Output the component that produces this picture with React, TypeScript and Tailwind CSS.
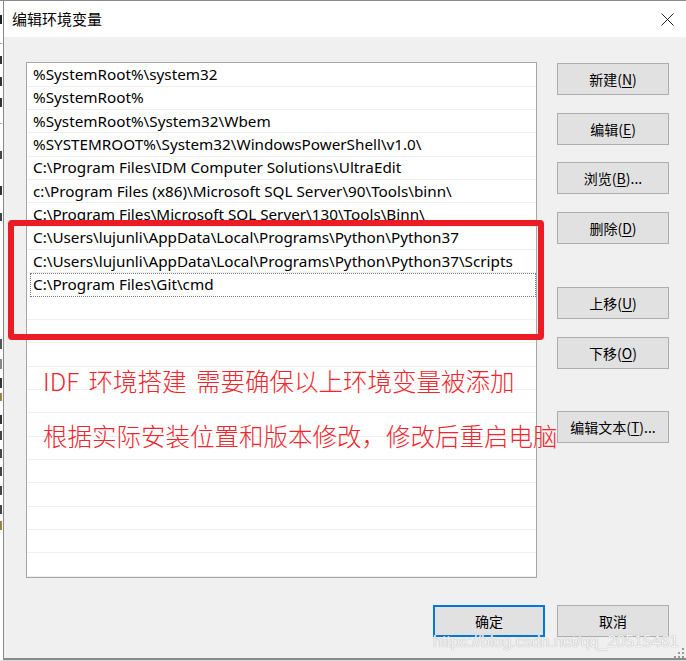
import React from "react";

const items = [
  "%SystemRoot%\\system32",
  "%SystemRoot%",
  "%SystemRoot%\\System32\\Wbem",
  "%SYSTEMROOT%\\System32\\WindowsPowerShell\\v1.0\\",
  "C:\\Program Files\\IDM Computer Solutions\\UltraEdit",
  "c:\\Program Files (x86)\\Microsoft SQL Server\\90\\Tools\\binn\\",
  "C:\\Program Files\\Microsoft SQL Server\\130\\Tools\\Binn\\",
  "C:\\Users\\lujunli\\AppData\\Local\\Programs\\Python\\Python37",
  "C:\\Users\\lujunli\\AppData\\Local\\Programs\\Python\\Python37\\Scripts",
  "C:\\Program Files\\Git\\cmd",
];

const cjk = "font-['Microsoft_YaHei','Noto_Sans_CJK_SC',sans-serif]";

function Btn({ label, mn, suffix = "", className = "" }: { label: string; mn?: string; suffix?: string; className?: string }) {
  return (
    <div
      className={`h-[32px] w-[112px] flex items-center justify-center bg-[#e1e1e1] border border-[#adadad] text-[14px] text-black ${cjk} ${className}`}
    >
      <span>
        {label}
        {mn ? (
          <>
            (<span className="underline underline-offset-2">{mn}</span>)
          </>
        ) : null}
        {suffix}
      </span>
    </div>
  );
}

function LeftStrip() {
  const marks = [
    { t: 14, h: 9, c: "bg-[#222]" },
    { t: 42, h: 1, c: "bg-[#999]" },
    { t: 55, h: 8, c: "bg-[#333]" },
    { t: 76, h: 9, c: "bg-[#333]" },
    { t: 97, h: 9, c: "bg-[#333]" },
    { t: 122, h: 1, c: "bg-[#aaa]" },
    { t: 150, h: 8, c: "bg-[#444]" },
    { t: 185, h: 9, c: "bg-[#333]" },
    { t: 212, h: 8, c: "bg-[#444]" },
    { t: 338, h: 10, c: "bg-[#555]" },
    { t: 358, h: 10, c: "bg-[#888]" },
    { t: 377, h: 10, c: "bg-[#333]" },
    { t: 392, h: 8, c: "bg-[#a08040]" },
    { t: 414, h: 9, c: "bg-[#333]" },
    { t: 430, h: 9, c: "bg-[#444]" },
    { t: 448, h: 9, c: "bg-[#444]" },
    { t: 466, h: 9, c: "bg-[#444]" },
    { t: 485, h: 9, c: "bg-[#444]" },
    { t: 504, h: 9, c: "bg-[#444]" },
    { t: 520, h: 9, c: "bg-[#a08040]" },
  ];
  let prev = 0;
  return (
    <div className="w-[3px] h-full bg-white flex flex-col">
      {marks.map((m, i) => {
        const mt = m.t - prev;
        prev = m.t + m.h;
        return <div key={i} className={`w-[2px] shrink-0 ${m.c}`} style={{ marginTop: mt, height: m.h }} />;
      })}
    </div>
  );
}

export default function App() {
  const rows = Array.from({ length: 22 }, (_, i) => items[i] ?? "");
  return (
    <div className="relative w-[686px] h-[661px] overflow-hidden bg-[#dcdcdc]">
      <div className="flex h-[660px] border-t border-[#8a8a8a]">
        <LeftStrip />
        <div className="flex-1 flex flex-col border-l border-b-2 border-[#8a8a8a]">
          {/* title bar */}
          <div className="h-[36px] bg-white flex items-center justify-between pl-[8px] pr-[12px]">
            <span className={`text-[15px] text-black ${cjk}`}>编辑环境变量</span>
            <svg width="13" height="13" viewBox="0 0 13 13" className="mt-[1px]">
              <path d="M0.5 0.5 L12.5 12.5 M12.5 0.5 L0.5 12.5" stroke="#222" strokeWidth="1" fill="none" />
            </svg>
          </div>
          {/* body */}
          <div className="flex-1 bg-[#f0f0f0] flex flex-col pl-[22px] pt-[25px]">
            <div className="flex gap-[20px]">
              <div className="w-[511px] h-[516px] bg-white border border-[#a6a6a6] overflow-hidden pt-[0.3px]">
                {rows.map((r, i) =>
                  i === 9 ? (
                    <div
                      key={i}
                      className="h-[23.33px] ml-[3px] border border-dotted border-[#7a7a7a] flex items-center pl-[2px] text-[15.25px] text-black font-['Segoe_UI','Noto_Sans',sans-serif] whitespace-nowrap"
                    >
                      {r}
                    </div>
                  ) : (
                    <div
                      key={i}
                      className="h-[23.33px] border-b border-[#f0f0f0] flex items-center pl-[6px] text-[15.25px] text-black font-['Segoe_UI','Noto_Sans',sans-serif] whitespace-nowrap"
                    >
                      {r}
                    </div>
                  )
                )}
              </div>
              <div className="flex flex-col pt-[1px]">
                <Btn label="新建" mn="N" />
                <Btn label="编辑" mn="E" className="mt-[18px]" />
                <Btn label="浏览" mn="B" suffix="..." className="mt-[17px]" />
                <Btn label="删除" mn="D" className="mt-[18px]" />
                <Btn label="上移" mn="U" className="mt-[43px]" />
                <Btn label="下移" mn="O" className="mt-[18px]" />
                <Btn label="编辑文本" mn="T" suffix="..." className="mt-[42px]" />
              </div>
            </div>
            <div className="flex gap-[12px] mt-[27px] ml-[407px]">
              <div className={`h-[32px] w-[112px] flex items-center justify-center bg-[#e1e1e1] border-2 border-[#0078d7] text-[14px] text-black ${cjk}`}>
                确定
              </div>
              <Btn label="取消" />
            </div>
          </div>
        </div>
      </div>

      {/* red annotation rectangle */}
      <div className="absolute left-[8px] top-[220px] w-[536px] h-[120px] border-[6px] border-[#ec1c24] rounded-[4px]" />

      {/* red annotation text */}
      <div className={`absolute left-[43px] top-[369px] text-[24.5px] font-light leading-none text-[#f0262e] whitespace-nowrap [word-spacing:4px] ${cjk}`}>
        IDF 环境搭建 需要确保以上环境变量被添加
      </div>
      <div className={`absolute left-[43px] top-[424px] text-[24.5px] font-light leading-none text-[#f0262e] whitespace-nowrap ${cjk}`}>
        根据实际安装位置和版本修改，修改后重启电脑
      </div>

      {/* watermark */}
      <div className="absolute left-[433px] top-[634px] text-[16px] leading-none text-white/90 whitespace-nowrap font-['Liberation_Sans',Arial,sans-serif] [text-shadow:0_0_1px_#8a8a8a]">
        https://blog.csdn.net/qq_20515461
      </div>

      {/* resize grip */}
      <svg className="absolute left-[674px] top-[648px]" width="10" height="10" viewBox="0 0 10 10">
        <rect x="8" y="0" width="2" height="2" fill="#9a9a9a" />
        <rect x="4" y="4" width="2" height="2" fill="#9a9a9a" />
        <rect x="8" y="4" width="2" height="2" fill="#9a9a9a" />
        <rect x="0" y="8" width="2" height="2" fill="#9a9a9a" />
        <rect x="4" y="8" width="2" height="2" fill="#9a9a9a" />
        <rect x="8" y="8" width="2" height="2" fill="#9a9a9a" />
      </svg>
    </div>
  );
}
